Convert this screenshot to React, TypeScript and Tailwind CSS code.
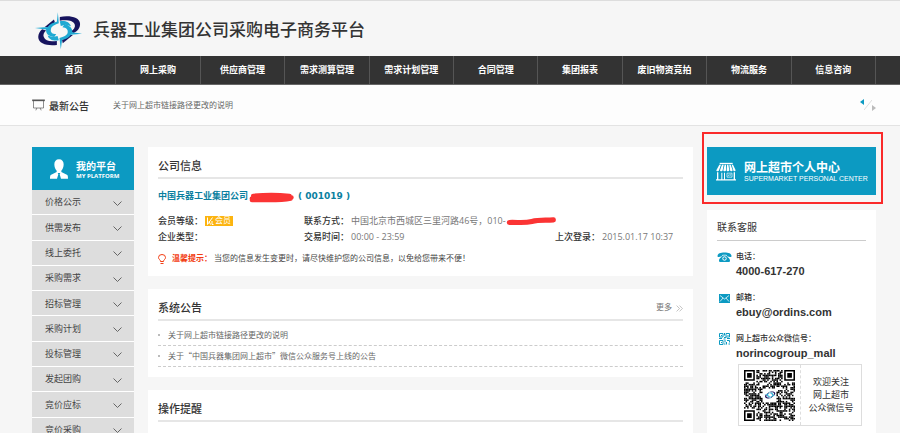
import React from 'react';

const navItems = [
  '首页',
  '网上采购',
  '供应商管理',
  '需求测算管理',
  '需求计划管理',
  '合同管理',
  '集团报表',
  '废旧物资竞拍',
  '物流服务',
  '信息咨询',
];

const menuItems = [
  '价格公示',
  '供需发布',
  '线上委托',
  '采购需求',
  '招标管理',
  '采购计划',
  '投标管理',
  '发起团购',
  '竞价应标',
  '竞价采购',
];

const notices = [
  '关于网上超市链接路径更改的说明',
  '关于“中国兵器集团网上超市”微信公众服务号上线的公告',
];

const contacts = [
  { label: '电话：', value: '4000-617-270', icon: PhoneIcon },
  { label: '邮箱：', value: 'ebuy@ordins.com', icon: MailIcon },
  { label: '网上超市公众微信号：', value: 'norincogroup_mall', icon: QrIcon },
];

function Logo({ className }: { className?: string }) {
  return (
    <svg viewBox="0 0 150 115" className={className} aria-hidden="true">
      <g fill="#17145e">
        <path d="M79 15C105 9 141 14 141 36C141 49 133 58 121 64L111 60C122 54 127 45 125 38C122 26 101 22 79 26Z" />
        <path d="M70 100C45 104 13 98 13 76C13 66 18 58 25 52L37 56C30 62 27 70 30 76C35 89 50 91 70 88Z" />
        <path d="M33 45L61 22L64 31L43 46Z" />
        <path d="M119 70L88 95L86 86L107 70Z" />
      </g>
      <g fill="#1fa9d3">
        <path d="M73 0L76 34C64 38 54 43 52 51C49 61 56 67 68 67L62 76C45 75 36 66 37 53L3 48L42 45C48 36 59 31 70 29Z" />
        <path d="M82 113L78 79C91 76 101 71 103 63C105 53 99 47 87 46L94 37C109 40 118 49 117 61L147 66L113 69C107 78 97 83 86 85Z" />
        <path d="M79 28C96 25 109 31 113 43L97 38L82 42Z" />
        <path d="M76 86C59 89 45 83 42 71L57 76L72 73Z" />
      </g>
    </svg>
  );
}

function PhoneIcon() {
  return (
    <svg viewBox="0 0 30 20" className="w-[15px] h-[10px]" aria-hidden="true">
      <path fill="#0c9ac2" d="M1 8C1 3 7 1 15 1s14 2 14 7c0 2-1 2-3 2l-4-1c-2 0-2-1-2-3-3-1-7-1-10 0 0 2 0 3-2 3l-4 1c-2 0-3 0-3-2Z" />
      <path fill="#0c9ac2" d="M11 7h8c1 4 7 5 7 10 0 2-1 3-3 3H7c-2 0-3-1-3-3 0-5 6-6 7-10Z" />
      <circle cx="15" cy="13" r="3.5" fill="none" stroke="white" strokeWidth="2" />
    </svg>
  );
}

function MailIcon() {
  return (
    <svg viewBox="0 0 22 18" className="w-[11px] h-[9px]" aria-hidden="true">
      <path fill="#0c9ac2" d="M0 0h22v18H0z" />
      <path fill="none" stroke="white" strokeWidth="1.5" d="m2 3 9 7 9-7M2 15l6-7M20 15l-6-7" />
    </svg>
  );
}

function QrIcon() {
  return (
    <svg viewBox="0 0 22 24" className="w-[11px] h-[12px]" aria-hidden="true">
      <g fill="none" stroke="#0c9ac2" strokeWidth="2">
        <path d="M1 1h7v7H1zM14 1h7v7h-7zM1 15h7v8H1z" />
        <path d="M11 0v5M10 9h4M0 11h6M9 12h4M16 11h6M12 14v5M16 15h5v4M15 18v5M19 22h3M10 22h3" />
      </g>
      <path fill="#0c9ac2" d="M4 4h2v2H4zM17 4h2v2h-2zM4 18h2v2H4z" />
    </svg>
  );
}

function StoreIcon() {
  return (
    <svg viewBox="0 0 60 56" className="w-5 h-[19px] shrink-0" aria-hidden="true">
      <g fill="white">
        <path d="M11 2h39v4H11z" />
        <path d="M10 8h5L9 24c-1 4-8 4-8 0zM18 8h5l-3 16c-1 4-8 4-8 0zM26 8h4v16c-1 4-8 4-8 0zM33 8h4l3 16c-1 4-8 4-8 0zM40 8h4l6 16c-1 4-7 4-8 0zM47 8h4l8 16c-1 4-7 4-7 0z" />
        <path d="M3 30h4v21H3zM53 30h4v21h-4zM0 51h60v4H0zM16 32h3v19h-3zM24 32h3v19h-3z" />
      </g>
      <path fill="none" stroke="white" strokeWidth="2" d="M33 33h15v12H33zM36 42l4-6M41 42l4-6" />
    </svg>
  );
}

function UserIcon() {
  return (
    <svg viewBox="0 0 54 60" className="w-[18px] h-5 shrink-0" aria-hidden="true">
      <path fill="white" d="M27 1c9 0 14 6 14 15 0 8-3 15-7 19v4l18 9c2 2 2 8 2 11H33l-4-13 2-4h-8l2 4-4 13H0c0-3 0-9 2-11l18-9v-4c-4-4-7-11-7-19C13 7 18 1 27 1Z" />
    </svg>
  );
}

// modules of the code, the three finder corners and the centre stay free
const QR_SIZE = 33;
const qrModules: { x: number; y: number }[] = [];
let seed = 46;
for (let y = 0; y < QR_SIZE; y++) {
  for (let x = 0; x < QR_SIZE; x++) {
    seed = (Math.imul(seed, 1664525) + 1013904223) >>> 0;
    const corner = (x < 8 && y < 8) || (x > 24 && y < 8) || (x < 8 && y > 24);
    const centre = x > 11 && x < 21 && y > 11 && y < 21;
    if (!corner && !centre && (seed >>> 16) % 100 < 56) qrModules.push({ x, y });
  }
}

function QrCode() {
  return (
    <div className="relative">
      <svg viewBox="0 0 33 33" className="w-[51px] h-[51px]" role="img">
        {qrModules.map((m) => (
          <rect key={`${m.x}-${m.y}`} x={m.x} y={m.y} width="1" height="1" fill="#000" />
        ))}
        <g fill="none" stroke="#000">
          <path d="M.5.5h6v6h-6zM26.5.5h6v6h-6zM.5 26.5h6v6h-6z" />
        </g>
        <path fill="#000" d="M2 2h3v3H2zM28 2h3v3h-3zM2 28h3v3H2z" />
      </svg>
      <div className="absolute inset-0 flex items-center justify-center">
        <Logo className="w-3 h-[10px]" />
      </div>
    </div>
  );
}

function Card({ title, more, children }: { title: string; more?: boolean; children?: React.ReactNode }) {
  return (
    <section className="bg-white px-[10px] pt-2">
      <div className="flex items-center justify-between h-6 border-b-2 border-[#e6e6e6]">
        <h2 className="text-[11px] font-medium text-[#333]">{title}</h2>
        {more && (
          <a href="#" className="flex items-center gap-1 text-[8px] text-[#777]">
            更多
            <svg viewBox="0 0 12 12" className="w-[7px] h-[7px]" fill="none" stroke="#999" aria-hidden="true">
              <path d="m1 1 5 5-5 5M6 1l5 5-5 5" />
            </svg>
          </a>
        )}
      </div>
      {children}
    </section>
  );
}

export default function App() {
  return (
    <div className="min-h-screen bg-[#f6f6f6] text-[#333] font-['Liberation_Sans','Noto_Sans_CJK_SC',sans-serif]">
      {/* Header */}
      <header className="flex items-center gap-[10px] h-14 pl-[34px] pt-1 border-t border-[#ddd]">
        <Logo className="w-[49px] h-[38px]" />
        <h1 className="text-[17px] font-medium text-[#333]">兵器工业集团公司采购电子商务平台</h1>
      </header>

      {/* Navigation */}
      <nav className="bg-[#333] border-b border-[#666] pl-8 pr-6">
        <ul className="grid grid-cols-10 h-7">
          {navItems.map((item) => (
            <li key={item} className="border-r border-[#555]">
              <a href="#" className="flex items-center justify-center h-full pt-[2px] text-[9px] font-bold text-white whitespace-nowrap">
                {item}
              </a>
            </li>
          ))}
        </ul>
      </nav>

      {/* Latest notice */}
      <div className="flex items-center h-[41px] pl-8 pr-6 bg-[#fdfdfd] border-b border-[#e3e3e3]">
        <svg viewBox="0 0 38 36" className="w-[13px] h-3 mr-1" fill="none" stroke="#555" strokeWidth="2" aria-hidden="true">
          <path strokeWidth="5" d="M0 4h38" />
          <path d="M4 4v23h30V4M14 27l-3 7M24 27l3 7" />
        </svg>
        <h2 className="w-[64px] pt-[2px] text-[10px] font-medium">最新公告</h2>
        <a href="#" className="pt-[2px] text-[8px] text-[#666]">关于网上超市链接路径更改的说明</a>
        <div className="flex ml-auto">
          <button type="button" aria-label="上一条" className="self-start w-1">
            <svg viewBox="0 0 4 6" className="w-1 h-[6px]"><path fill="#0c9ac2" d="M4 0v6L0 3z" /></svg>
          </button>
          <svg viewBox="0 0 8 12" className="w-2 h-3" stroke="#ddd" aria-hidden="true"><path d="M0 11 8 1" /></svg>
          <button type="button" aria-label="下一条" className="self-end w-1">
            <svg viewBox="0 0 4 6" className="w-1 h-[6px]"><path fill="#bbb" d="M0 0v6l4-3z" /></svg>
          </button>
        </div>
      </div>

      <div className="flex items-start gap-[14px] pl-8 pr-6 pt-[21px]">
        {/* Side menu */}
        <aside className="w-[102px] shrink-0">
          <div className="flex items-center gap-2 h-[43px] pl-[18px] bg-[#0c9ac2] text-white">
            <UserIcon />
            <div className="pt-[2px]">
              <p className="text-[10px] leading-3 font-bold">我的平台</p>
              <p className="text-[6px] leading-[6px] font-bold font-['Open_Sans',sans-serif]">MY PLATFORM</p>
            </div>
          </div>
          <ul className="grid auto-rows-fr h-[253px]">
            {menuItems.map((item) => (
              <li key={item} className="bg-[#ddd] border-b border-white">
                <button type="button" className="flex items-center justify-between w-full h-full pl-[13px] pr-3 pt-[2px] text-[9px] text-[#444]">
                  {item}
                  <svg viewBox="0 0 18 10" className="w-[9px] h-[5px]" fill="none" stroke="#666" strokeWidth="2" aria-hidden="true">
                    <path d="m1 1 8 8 8-8" />
                  </svg>
                </button>
              </li>
            ))}
          </ul>
        </aside>

        {/* Content */}
        <main className="flex-1 min-w-0 flex flex-col gap-[13px]">
          <Card title="公司信息">
            <p className="flex items-center h-4 mt-[10px] text-[9px] font-bold text-[#0a7f9f] font-['DejaVu_Sans','Noto_Sans_CJK_SC',sans-serif]">
              中国兵器工业集团公司
              <svg viewBox="0 0 144 34" className="w-12 h-[11px]" aria-hidden="true">
                <path d="M10 20C40 14 90 14 132 17M10 25C50 23 90 28 130 20M14 12C50 9 90 9 126 12" fill="none" stroke="#fb3434" strokeWidth="14" strokeLinecap="round" />
              </svg>
              <span className="ml-[2px]">( 001019 )</span>
            </p>
            <dl className="grid grid-cols-[146px_1fr_128px] mt-2 text-[9px] leading-4 whitespace-nowrap">
              <div className="flex items-center">
                <dt className="font-medium">会员等级：</dt>
                <dd className="flex items-center gap-px h-[10px] ml-[2px] px-[2px] bg-[#fcb410] text-[8px] text-white">
                  <svg viewBox="0 0 14 16" className="w-[7px] h-2" fill="none" stroke="white" strokeWidth="2" aria-hidden="true">
                    <path d="M1 1v14L11 1M4 8l3 7M10 8v7h3" />
                  </svg>
                  会员
                </dd>
              </div>
              <div className="col-span-2 flex items-center">
                <dt className="font-medium">联系方式：</dt>
                <dd className="flex items-center ml-[2px] text-[#777] font-['Open_Sans','Noto_Sans_CJK_SC',sans-serif]">
                  中国北京市西城区三里河路46号，010-
                  <svg viewBox="0 0 154 28" className="w-[51px] h-[9px]" aria-hidden="true">
                    <path d="M8 17C35 16 55 20 78 14S120 11 145 9" fill="none" stroke="#fb3434" strokeWidth="16" strokeLinecap="round" />
                  </svg>
                </dd>
              </div>
              <div className="flex">
                <dt className="font-medium">企业类型：</dt>
                <dd />
              </div>
              <div className="flex">
                <dt className="font-medium">交易时间：</dt>
                <dd className="ml-[2px] text-[#777] font-['Open_Sans','Noto_Sans_CJK_SC',sans-serif]">00:00 - 23:59</dd>
              </div>
              <div className="flex">
                <dt className="font-medium">上次登录：</dt>
                <dd className="ml-[2px] text-[#777] font-['Open_Sans','Noto_Sans_CJK_SC',sans-serif]">2015.01.17 10:37</dd>
              </div>
            </dl>
            <p className="flex items-center h-4 mt-[6px] text-[8px] text-[#444]">
              <svg viewBox="0 0 16 22" className="w-2 h-[11px] mr-[6px]" fill="none" stroke="#f23c12" strokeWidth="2" aria-hidden="true">
                <path d="M5 15C5 11 1 11 1 7a7 6 0 0 1 14 0c0 4-4 4-4 8zM5 19h6" />
              </svg>
              <strong className="mr-[2px] text-[#f23c12]">温馨提示：</strong>
              当您的信息发生变更时，请尽快维护您的公司信息，以免给您带来不便！
            </p>
            <div className="h-[9px]" />
          </Card>

          <Card title="系统公告" more>
            <ul className="pt-1 pb-[10px]">
              {notices.map((notice) => (
                <li key={notice} className="flex items-center gap-2 h-[21px] border-b border-dashed border-[#ccc]">
                  <span className="w-[2px] h-[2px] bg-[#bbb]" />
                  <a href="#" className="text-[8px] text-[#666] font-['Noto_Sans_CJK_SC',sans-serif]">{notice}</a>
                </li>
              ))}
            </ul>
          </Card>

          <Card title="操作提醒">
            <div className="h-5" />
          </Card>
        </main>

        {/* Right column */}
        <aside className="w-[169px] shrink-0">
          <div className="relative">
            <a href="#" className="flex items-center gap-2 h-12 pl-[9px] bg-[#0c9ac2] text-white whitespace-nowrap">
              <StoreIcon />
              <span>
                <span className="block text-[12px] leading-[14px] font-bold">网上超市个人中心</span>
                <span className="block text-[7px] leading-[7px]">SUPERMARKET PERSONAL CENTER</span>
              </span>
            </a>
            <div className="absolute -top-[15px] -bottom-[9px] -left-[5px] -right-[7px] border-2 border-[#fa2a2a] pointer-events-none" />
          </div>

          <section className="mt-[15px] px-[10px] pt-1 pb-[18px] bg-white">
            <h2 className="flex items-center h-[27px] border-b border-[#ccc] text-[10px]">联系客服</h2>
            <ul className="flex flex-col gap-3 pt-[9px]">
              {contacts.map(({ label, value, icon: Icon }) => (
                <li key={label} className="flex gap-1 whitespace-nowrap">
                  <span className="flex items-center justify-center w-[15px] h-[14px]">
                    <Icon />
                  </span>
                  <div>
                    <p className="text-[8px] leading-[14px] font-medium">{label}</p>
                    <p className="text-[11px] leading-[15px] font-bold">{value}</p>
                  </div>
                </li>
              ))}
            </ul>
            <div className="flex w-[124px] h-[62px] mt-[3px] ml-[21px] border border-[#ddd]">
              <div className="flex items-center justify-center w-[62px] border-r border-dashed border-[#ddd]">
                <QrCode />
              </div>
              <p className="flex-1 self-center text-center text-[9px] leading-[13px]">
                欢迎关注
                <br />
                网上超市
                <br />
                公众微信号
              </p>
            </div>
          </section>
        </aside>
      </div>
    </div>
  );
}
